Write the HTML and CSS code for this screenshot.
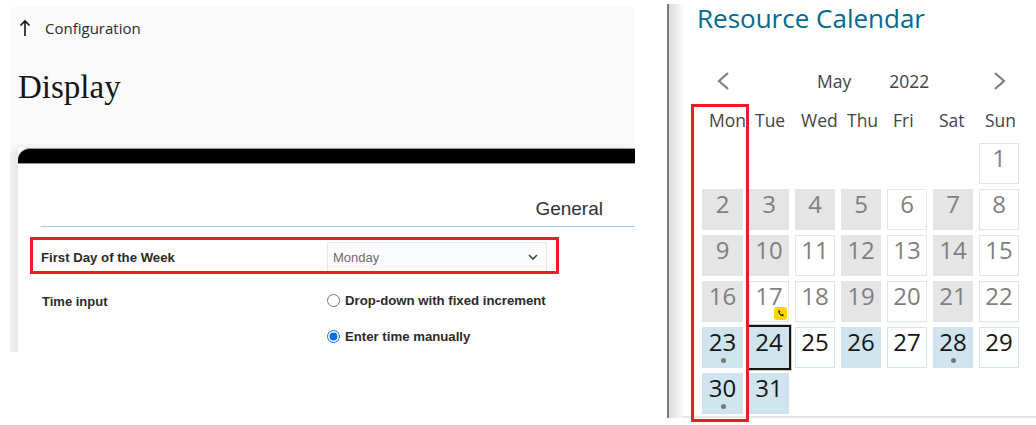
FILE: index.html
```html
<!DOCTYPE html>
<html lang="en">
<head>
  <meta charset="UTF-8">
  <title>Display and Resource Calendar</title>
  <link rel="stylesheet" href="styles.css">
</head>
<body>
  <div class="page">
    <section class="settings">
      <div class="crumb">
        <svg class="crumb-arrow" width="12" height="18" viewBox="0 0 12 18"><path d="M6 17V2M1.5 6.5 6 2l4.5 4.5" fill="none" stroke="#161513" stroke-width="1.6"/></svg>
        <span>Configuration</span>
      </div>
      <h1>Display</h1>
      <div class="card">
        <div class="card-bar"></div>
        <div class="card-body">
          <h2>General</h2>
          <div class="row row-first">
            <label class="row-label">First Day of the Week</label>
            <div class="select">
              <span>Monday</span>
              <svg width="10" height="6" viewBox="0 0 10 6"><path d="M1 1l4 4 4-4" fill="none" stroke="#444" stroke-width="1.6"/></svg>
            </div>
          </div>
          <div class="row row-time">
            <label class="row-label">Time input</label>
            <div class="radios">
              <label class="radio"><input type="radio" name="time"> Drop-down with fixed increment</label>
              <label class="radio"><input type="radio" name="time" checked> Enter time manually</label>
            </div>
          </div>
        </div>
      </div>
    </section>

    <section class="calendar">
      <h2 class="cal-title">Resource Calendar</h2>
      <div class="cal-nav">
        <svg class="nav-prev" width="14" height="20" viewBox="0 0 14 20"><path d="M12 2 3 10l9 8" fill="none" stroke="#7f7f7f" stroke-width="2.2"/></svg>
        <span class="nav-month">May</span>
        <span class="nav-year">2022</span>
        <svg class="nav-next" width="14" height="20" viewBox="0 0 14 20"><path d="M2 2l9 8-9 8" fill="none" stroke="#7f7f7f" stroke-width="2.2"/></svg>
      </div>
      <div class="weekdays">
        <span>Mon</span><span>Tue</span><span>Wed</span><span>Thu</span><span>Fri</span><span>Sat</span><span>Sun</span>
      </div>
      <div class="days">
        <div class="day past open first-sun">1</div>
        <div class="day past busy">2</div>
        <div class="day past busy">3</div>
        <div class="day past busy">4</div>
        <div class="day past busy">5</div>
        <div class="day past open">6</div>
        <div class="day past busy">7</div>
        <div class="day past open">8</div>
        <div class="day past busy">9</div>
        <div class="day past busy">10</div>
        <div class="day past open">11</div>
        <div class="day past busy">12</div>
        <div class="day past open">13</div>
        <div class="day past busy">14</div>
        <div class="day past open">15</div>
        <div class="day past busy">16</div>
        <div class="day past open">17
          <span class="badge"><svg width="8" height="8" viewBox="0 0 8 8"><path d="M1.2.8 2.6.6l.7 1.5-.8.7c.4.9 1.1 1.6 2 2l.7-.8 1.5.7-.2 1.4C3.500 6.300 1.500 4 1.200.8z" fill="#161513"/></svg></span>
        </div>
        <div class="day past open">18</div>
        <div class="day past busy">19</div>
        <div class="day past open">20</div>
        <div class="day past busy">21</div>
        <div class="day past open">22</div>
        <div class="day now busy">23<i class="dot"></i></div>
        <div class="day now busy today">24</div>
        <div class="day now open">25</div>
        <div class="day now busy">26</div>
        <div class="day now open">27</div>
        <div class="day now busy">28<i class="dot"></i></div>
        <div class="day now open">29</div>
        <div class="day now busy">30<i class="dot"></i></div>
        <div class="day now busy">31</div>
      </div>
    </section>

    <div class="mark mark-row"></div>
    <div class="mark mark-col"></div>
  </div>
</body>
</html>
```

FILE: styles.css
```css
html, body {
  margin: 0;
  background-color: #fff;
}

.page {
  position: relative;
  display: flex;
  align-items: flex-start;
  width: 1036px;
  height: 425px;
  overflow: hidden;
  font-family: "Open Sans", sans-serif;
  color: #161513;
}

/* left screenshot */
.settings {
  box-sizing: border-box;
  width: 625px;
  height: 345px;
  margin: 7px 0 0 10px;
  padding-left: 8px;
  background-color: #fafafa;
  overflow: hidden;
}

.crumb {
  display: flex;
  align-items: center;
  gap: 14px;
  height: 18px;
  margin-top: 12px;
  font-size: 15px;
  color: #2b2b2b;
}

.crumb-arrow {
  margin-left: 1px;
}

h1 {
  margin: 30px 0 0;
  font-family: "Liberation Serif", serif;
  font-size: 33px;
  line-height: 40px;
  font-weight: normal;
}

.card {
  margin-top: 42px;
  box-shadow: -6px 0 8px rgba(0,0,0,0.08);
}

.card-bar {
  height: 14px;
  background-color: #000;
  border-top: 1px solid #999;
  border-bottom: 1px solid #999;
  border-top-left-radius: 12px;
  margin-top: -1px;
}

.card-body {
  height: 189px;
  padding: 31px 0 0 23px;
  background-color: #fff;
  font-family: "Liberation Sans", sans-serif;
}

.card-body h2 {
  margin: 0;
  height: 31px;
  padding-right: 32px;
  border-bottom: 1px solid #99ccff;
  font-size: 19px;
  line-height: 27px;
  font-weight: normal;
  text-align: right;
  color: #333;
}

.row {
  display: flex;
}

.row-first {
  align-items: center;
  margin-top: 15px;
}

.row-time {
  margin-top: 22px;
  padding-left: 1px;
}

.row-label {
  width: 286px;
  font-size: 13.2px;
  font-weight: bold;
  color: #2b2b2b;
}

.row-time .row-label {
  width: 285px;
  font-size: 13px;
}

.select {
  box-sizing: border-box;
  display: flex;
  align-items: center;
  justify-content: space-between;
  width: 220px;
  height: 30px;
  padding: 0 8px 0 5px;
  background-color: #fbfcfe;
  border: 1px solid #e4e8ec;
  font-size: 13px;
  color: #6b6b6b;
}

.radios {
  display: flex;
  flex-direction: column;
  gap: 21px;
  margin-top: -1px;
}

.radio {
  display: flex;
  align-items: center;
  gap: 5px;
  height: 15px;
  font-size: 13.2px;
  font-weight: bold;
  color: #2b2b2b;
}

.radio input {
  width: 13px;
  height: 13px;
  margin: 0;
  accent-color: #0b6cf0;
}

/* right screenshot */
.calendar {
  box-sizing: border-box;
  width: 369px;
  height: 414px;
  margin: 4px 0 0 32px;
  padding-left: 30px;
  border-left: 2px solid #7a7a7a;
  background: linear-gradient(to right, #dcdcdc, #fff 16px);
  position: relative;
}

.calendar::after {
  content: "";
  position: absolute;
  left: 12px;
  right: 0;
  bottom: 0;
  height: 2px;
  background-color: #e6e6e6;
}

.cal-title {
  margin: -1px 0 0 -2px;
  font-size: 26px;
  line-height: 30px;
  font-weight: normal;
  color: #006b8f;
}

.cal-nav {
  display: flex;
  align-items: center;
  height: 20px;
  margin-top: 38px;
  font-size: 17.5px;
  color: #444;
}

.nav-prev { margin-left: 17px; }
.nav-month { margin-left: 87px; }
.nav-year { margin-left: 38px; }
.nav-next { margin-left: 64px; }

.weekdays {
  display: grid;
  grid-template-columns: repeat(7, 46px);
  height: 24px;
  margin-top: 17px;
  padding-left: 10px;
  font-size: 17.5px;
  line-height: 24px;
  color: #444;
}

.days {
  display: grid;
  grid-template-columns: 41px repeat(6, 40px);
  grid-auto-rows: 41px;
  gap: 5px 6px;
  margin-top: 11px;
  margin-left: 3px;
}

.first-sun {
  grid-column: 7;
}

.day {
  box-sizing: border-box;
  position: relative;
  font-size: 24px;
  line-height: 28px;
  text-align: center;
  border: 1px solid transparent;
}

.past { color: #7f7f7f; }
.now { color: #161513; }

.past.busy { background-color: #e5e5e5; }
.past.open { background-color: #fff; border-color: #e4e4e4; }
.now.busy { background-color: #d0e4ee; }
.now.open { background-color: #fff; border-color: #d4e4ec; }

.today {
  margin: -2px;
  line-height: 30px;
  border: 2px solid #161513;
  box-shadow: 0 0 0 1px #ccc;
}

.dot {
  position: absolute;
  left: 50%;
  bottom: 4px;
  width: 5px;
  height: 5px;
  margin-left: -2px;
  border-radius: 50%;
  background-color: #777;
}

.badge {
  position: absolute;
  right: 1px;
  bottom: 1px;
  display: flex;
  align-items: center;
  justify-content: center;
  width: 13px;
  height: 13px;
  border-radius: 3px;
  background-color: #ffd500;
}

/* red annotation boxes drawn over the screenshots */
.mark {
  position: absolute;
  box-sizing: border-box;
  border: 3px solid #ed1c24;
}

.mark-row {
  left: 30px;
  top: 237px;
  width: 529px;
  height: 37px;
}

.mark-col {
  left: 691px;
  top: 104px;
  width: 58px;
  height: 318px;
}
```
